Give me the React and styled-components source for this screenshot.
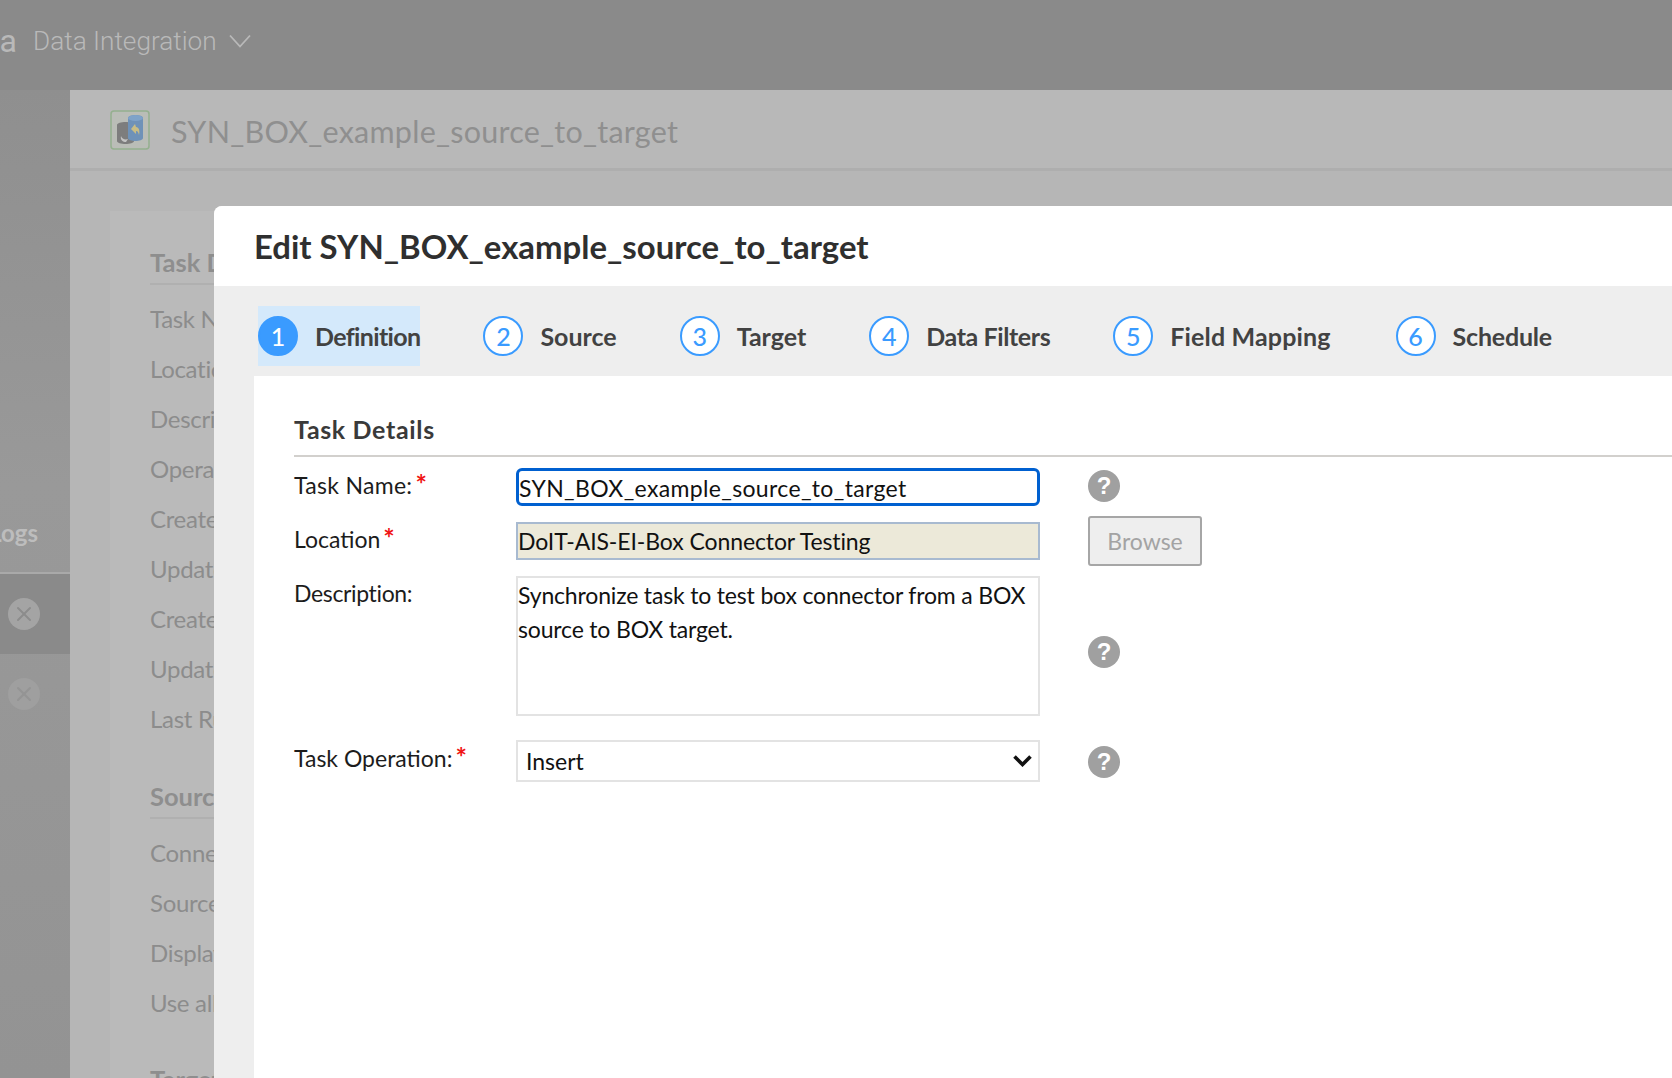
import React from "react";
import styled, { createGlobalStyle } from "styled-components";
import { X } from "lucide-react";

const FUTURA = `"Lato", "Open Sans", "Liberation Sans", sans-serif`;

const GlobalStyle = createGlobalStyle`
  html, body {
    margin: 0;
    padding: 0;
    height: 100%;
    overflow: hidden;
    background: #b6b6b6;
    font-family: ${FUTURA};
  }
  * { box-sizing: border-box; }
`;

const Shell = styled.div`
  position: relative;
  width: 1672px;
  height: 1078px;
  overflow: hidden;
  display: flex;
  flex-direction: column;
`;

/* top bar */
const TopBar = styled.header`
  height: 90px;
  flex: none;
  background: #8a8a8a;
  display: flex;
  align-items: center;
  padding-bottom: 9px;
  color: #b9b9b9;
`;

const Brand = styled.div`
  width: 17px;
  overflow: hidden;
  display: flex;
  justify-content: flex-end;
  font: 400 32px "Roboto", sans-serif;
  white-space: nowrap;
`;

const AppName = styled.span`
  margin-left: 16px;
  font: 300 26.2px "Roboto", sans-serif;
`;

const AppChevron = styled.svg`
  width: 22px;
  height: 14px;
  margin-left: 12px;
  fill: none;
  stroke: #b9b9b9;
  stroke-width: 1.8;
`;

const Body = styled.div`
  flex: 1;
  display: flex;
  min-height: 0;
`;

/* left rail */
const Rail = styled.aside`
  width: 70px;
  flex: none;
  background: linear-gradient(#8f8f8f, #999999 40%, #939393);
  display: flex;
  flex-direction: column;
`;

const RailTitle = styled.div`
  height: 482px;
  width: 38px;
  overflow: hidden;
  display: flex;
  justify-content: flex-end;
  align-items: flex-end;
  padding-bottom: 25px;
  font: 700 24px ${FUTURA};
  color: #bdbdbd;
`;

const RailDivider = styled.div`
  height: 2px;
  background: #a9a9a9;
`;

const RailRow = styled.div`
  height: 80px;
  display: flex;
  align-items: center;
  padding-left: 8px;
  background: ${(p) => (p.$active ? "#8a8a8a" : "transparent")};
`;

const RailClose = styled.span`
  width: 32px;
  height: 32px;
  border-radius: 50%;
  display: flex;
  align-items: center;
  justify-content: center;
  background: ${(p) => (p.$active ? "#a4a4a4" : "#9f9f9f")};
  color: ${(p) => (p.$active ? "#8c8c8c" : "#949494")};
`;

/* page behind the dialog */
const Main = styled.main`
  flex: 1;
  min-width: 0;
  display: flex;
  flex-direction: column;
  background: #b6b6b6;
`;

const PageHeader = styled.div`
  height: 81px;
  flex: none;
  display: flex;
  align-items: center;
  gap: 21px;
  padding: 2px 0 0 40px;
  background: #b8b8b8;
  border-bottom: 3px solid #aeaeae;
`;

const TaskBadge = styled.svg`
  width: 40px;
  height: 40px;
  flex: none;
`;

const PageTitle = styled.h1`
  margin: 2px 0 0;
  font: 400 30.5px ${FUTURA};
  color: #8f8f8f;
  letter-spacing: 0.25px;
`;

const Card = styled.div`
  margin: 40px 0 0 40px;
  flex: 1;
  background: #bababa;
  padding: 38px 0 0 40px;
`;

const CardHeading = styled.h3`
  margin: ${(p) => p.$gap || 0}px 0 8px;
  height: 36px;
  font: 700 25.5px/27px ${FUTURA};
  color: #8e8e8e;
  border-bottom: 2px solid #b0b0b0;
  white-space: nowrap;
`;

const CardRow = styled.div`
  height: 50px;
  display: flex;
  align-items: center;
  font: 400 24px ${FUTURA};
  letter-spacing: -0.3px;
  color: #8c8c8c;
  white-space: nowrap;
`;

/* dialog */
const Dialog = styled.section`
  position: absolute;
  left: 214px;
  top: 206px;
  right: 0;
  bottom: 0;
  background: #eeeeee;
  border-top-left-radius: 8px;
  display: flex;
  flex-direction: column;
`;

const DialogHeader = styled.div`
  height: 80px;
  flex: none;
  background: #fff;
  border-top-left-radius: 8px;
  display: flex;
  align-items: center;
  padding-left: 40px;
  font: 700 32.9px ${FUTURA};
  color: #2f2f2f;
`;

const Steps = styled.nav`
  height: 90px;
  flex: none;
  display: flex;
  align-items: center;
  padding: 9px 0 0 44px;
`;

const Step = styled.div`
  height: 60px;
  display: flex;
  align-items: center;
  gap: 17px;
  margin-right: ${(p) => p.$after}px;
  background: ${(p) => (p.$active ? "#d4e9fb" : "transparent")};
`;

const StepNumber = styled.span`
  width: 40px;
  height: 40px;
  flex: none;
  border-radius: 50%;
  border: 2px solid #3a9bff;
  display: flex;
  align-items: center;
  justify-content: center;
  font: 500 25px ${FUTURA};
  color: ${(p) => (p.$active ? "#fff" : "#3a9bff")};
  background: ${(p) => (p.$active ? "#3a9bff" : "#fff")};
`;

const StepLabel = styled.span`
  font: 700 25px ${FUTURA};
  letter-spacing: ${(p) => p.$spacing || 0}px;
  color: #424242;
  white-space: nowrap;
`;

const DialogBody = styled.div`
  flex: 1;
  margin-left: 40px;
  background: #fff;
  padding: 35px 0 0 40px;
`;

const SectionTitle = styled.h2`
  margin: 0;
  height: 46px;
  font: 700 25px/36px ${FUTURA};
  letter-spacing: 0.65px;
  color: #3a3a3a;
  border-bottom: 2px solid #d2d0cd;
`;

const Form = styled.div`
  display: grid;
  grid-template-columns: 222px 524px 48px auto;
  grid-template-rows: 38px 38px 148px 42px;
  row-gap: 16px;
  margin-top: 11px;
  justify-content: start;
`;

const Label = styled.label`
  font: 400 23px ${FUTURA};
  letter-spacing: ${(p) => p.$spacing || 0}px;
  color: #1c1c1c;
  padding-top: ${(p) => p.$top ?? 3}px;
  white-space: nowrap;
`;

const Required = styled.span`
  color: #f01414;
  font-size: 27px;
  line-height: 1;
  font-weight: 700;
  margin-left: 3px;
`;

const Field = styled.div`
  font: 400 23px/33px ${FUTURA};
  color: #111;
  padding: 2px 1px;
  white-space: nowrap;
  border: 2px solid #e3e3e3;
  background: #fff;
`;

const FocusedField = styled(Field)`
  border: 3px solid #0060d0;
  border-radius: 6px;
  padding: 1px 0 0;
  line-height: 33px;
  letter-spacing: 0.35px;
`;

const ReadOnlyField = styled(Field)`
  border-color: #a8bad0;
  background: #ece9d9;
  padding: 1px 0 0;
  letter-spacing: -0.1px;
`;

const AreaField = styled(Field)`
  height: 140px;
  line-height: 34px;
  padding: 0;
  letter-spacing: -0.17px;
  white-space: normal;
`;

const SelectField = styled(Field)`
  display: flex;
  align-items: center;
  justify-content: space-between;
  padding: 0 6px 0 8px;
`;

const SelectChevron = styled.svg`
  width: 19px;
  height: 12px;
  fill: none;
  stroke: #111;
  stroke-width: 3.6;
`;

const HelpCell = styled.div`
  grid-column: 4;
  margin-top: ${(p) => p.$top || 0}px;
`;

const HelpIcon = styled.span`
  width: 32px;
  height: 32px;
  border-radius: 50%;
  background: #a0a0a0;
  color: #fff;
  display: flex;
  align-items: center;
  justify-content: center;
  font: 700 24px "Liberation Sans", sans-serif;
`;

const BrowseButton = styled.button`
  display: block;
  width: 114px;
  height: 50px;
  margin-top: -6px;
  border: 2px solid #a6a6a6;
  border-radius: 3px;
  background: #eeeeee;
  color: #a3a3a3;
  font: 400 23px ${FUTURA};
  padding: 0;
`;

const steps = [
  { label: "Definition", after: 63, spacing: -0.65 },
  { label: "Source", after: 63 },
  { label: "Target", after: 63 },
  { label: "Data Filters", after: 63, spacing: -0.4 },
  { label: "Field Mapping", after: 65, spacing: 0.15 },
  { label: "Schedule", after: 0, spacing: -0.2 },
];

const firstRows = ["Task Name", "Location", "Description", "Operation", "Created On", "Updated On", "Created By", "Updated By", "Last Run"];
const sourceRows = ["Connection", "Source Type", "Display Source", "Use all fields"];

const Help = ({ top }) => (
  <HelpCell $top={top}>
    <HelpIcon>?</HelpIcon>
  </HelpCell>
);

const App = () => (
  <Shell>
    <GlobalStyle />
    <TopBar>
      <Brand>Informatica</Brand>
      <AppName>Data Integration</AppName>
      <AppChevron viewBox="0 0 22 14">
        <path d="M1 1.500l10 11 10-11" />
      </AppChevron>
    </TopBar>
    <Body>
      <Rail>
        <RailTitle>Logs</RailTitle>
        <RailDivider />
        <RailRow $active>
          <RailClose $active>
            <X size={24} strokeWidth={2} />
          </RailClose>
        </RailRow>
        <RailRow>
          <RailClose>
            <X size={24} strokeWidth={2} />
          </RailClose>
        </RailRow>
      </Rail>
      <Main>
        <PageHeader>
          <TaskBadge viewBox="0 0 40 40">
            <rect x="1" y="1" width="38" height="38" rx="3" fill="#babdb7" stroke="#94b08e" strokeWidth="1.5" />
            <path d="M7 15c0-4 17-4 17 0v16c0 4-17 4-17 0z" fill="#7d7d7d" />
            <path d="M18 8c0-4 15-4 15 0v20c0 4-15 4-15 0z" fill="#6f92b8" />
            <ellipse cx="25.500" cy="8" rx="7.500" ry="3" fill="#7fa3c9" />
            <path d="M21 19l4-5 1 3c3 0 4 4 3 8-1-3-1-4-3-4v3z" fill="#c9bd85" />
            <path d="M11 26c1 3 4 4 7 3l-2 3c-3 0-6-2-5-6z" fill="#c4c4c4" />
          </TaskBadge>
          <PageTitle>SYN_BOX_example_source_to_target</PageTitle>
        </PageHeader>
        <Card>
          <CardHeading>Task Details</CardHeading>
          {firstRows.map((row) => (
            <CardRow key={row}>{row}</CardRow>
          ))}
          <CardHeading $gap={40}>Source Details</CardHeading>
          {sourceRows.map((row) => (
            <CardRow key={row}>{row}</CardRow>
          ))}
          <CardHeading $gap={39}>Target Details</CardHeading>
        </Card>
      </Main>
    </Body>
    <Dialog>
      <DialogHeader>Edit SYN_BOX_example_source_to_target</DialogHeader>
      <Steps>
        {steps.map((step, i) => (
          <Step key={step.label} $active={i === 0} $after={step.after}>
            <StepNumber $active={i === 0}>{i + 1}</StepNumber>
            <StepLabel $spacing={step.spacing}>{step.label}</StepLabel>
          </Step>
        ))}
      </Steps>
      <DialogBody>
        <SectionTitle>Task Details</SectionTitle>
        <Form>
          <Label $top={2} $spacing={0.3}>
            Task Name:<Required>*</Required>
          </Label>
          <FocusedField>SYN_BOX_example_source_to_target</FocusedField>
          <span />
          <Help top={2} />

          <Label $top={2}>
            Location<Required>*</Required>
          </Label>
          <ReadOnlyField>DoIT-AIS-EI-Box Connector Testing</ReadOnlyField>
          <span />
          <HelpCell>
            <BrowseButton>Browse</BrowseButton>
          </HelpCell>

          <Label $spacing={-0.35}>Description:</Label>
          <AreaField>Synchronize task to test box connector from a BOX source to BOX target.</AreaField>
          <span />
          <Help top={60} />

          <Label>
            Task Operation:<Required>*</Required>
          </Label>
          <SelectField>
            Insert
            <SelectChevron viewBox="0 0 19 12">
              <path d="M1.500 1.500l8 8 8-8" />
            </SelectChevron>
          </SelectField>
          <span />
          <Help top={6} />
        </Form>
      </DialogBody>
    </Dialog>
  </Shell>
);

export default App;
